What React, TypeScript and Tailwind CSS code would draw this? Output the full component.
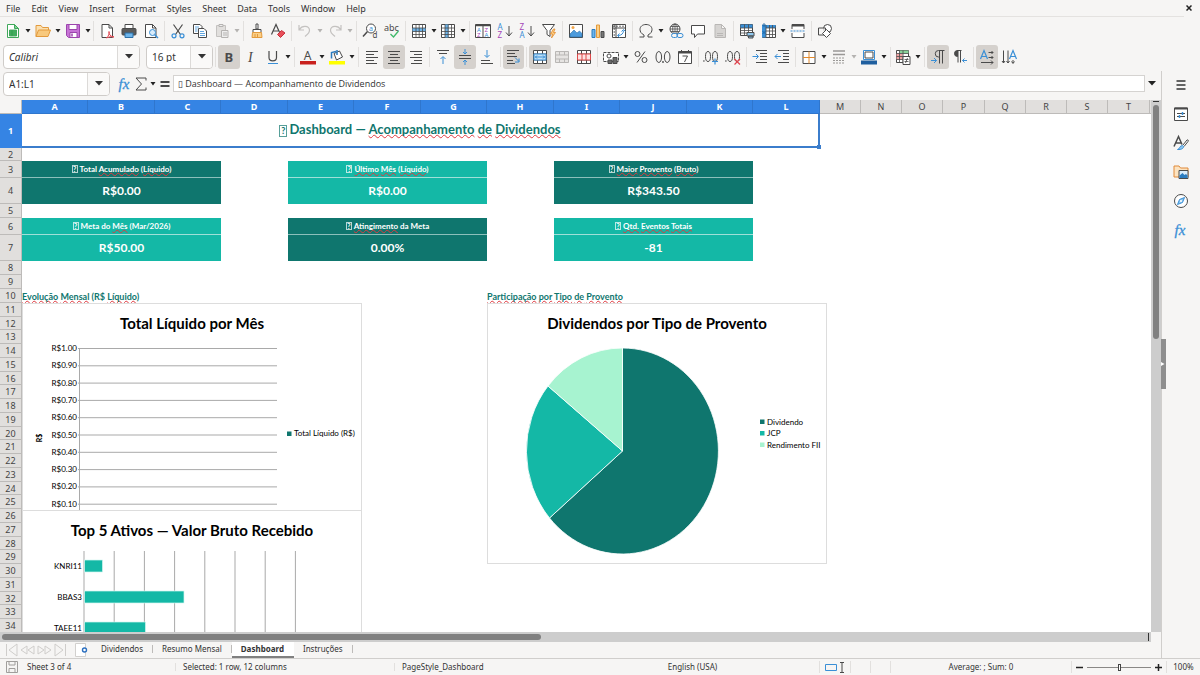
import { Fragment, ReactNode, useState } from 'react';

const INK = '#4a4a4a';
const BLUE = '#3a8fd6';
const DIM = '#c4c2c0';

// Icon drawings, all on a 16x16 grid
const icons: Record<string, ReactNode> = {
  new: (
    <>
      <path d="M2.5 1.5h7l4 4v9h-11z" fill="#fff" stroke="#3fa85a" />
      <path d="M9.5 1.5v4h4z" fill="#7ed394" stroke="#3fa85a" />
      <path d="M4.5 7h7v6h-7zM4.5 9h7M4.5 11h7M7 7v6" fill="#4fb96a" stroke="#2f9a4c" strokeWidth=".8" />
    </>
  ),
  open: (
    <>
      <path d="M1 13.5v-11h5l1.5 2h6v3" fill="#fbe0b0" stroke="#e39a3c" />
      <path d="M1 13.5l2.500-6.500h12l-2.500 6.500z" fill="#f8c97d" stroke="#e39a3c" />
    </>
  ),
  save: (
    <>
      <path d="M1.5 1.5h13v13h-11l-2-2z" fill="#c774d6" stroke="#9c45ad" />
      <path d="M4 1.5h8v5h-8zM5 9.5h7v5h-7z" fill="#fff" stroke="#9c45ad" />
      <path d="M7 10.5v3" stroke="#9c45ad" strokeWidth="1.5" />
    </>
  ),
  pdf: (
    <>
      <path d="M3 1.5h7l3.500 3.500v9.500H3z" fill="#fff" stroke={INK} />
      <path d="M10 1.5V5h3.500" stroke={INK} />
      <path d="M7.5 15c2-2 3-4 2.500-6.500-.3 3 1.500 5 5 5.500-3-.8-6 .2-7.500 1z" fill="#fff" stroke="#e0454f" />
    </>
  ),
  print: (
    <>
      <path d="M4 5V1.500h8V5" fill="#fff" stroke={INK} />
      <rect x="1" y="5.5" width="14" height="6.5" rx="1" fill="#5b5b5b" stroke={INK} />
      <path d="M4 10h8v4.500H4z" fill="#6db4ea" stroke="#2b6ea6" />
    </>
  ),
  preview: (
    <>
      <path d="M2.5 1.5h7l3.500 3.500v9.500H2.500z" fill="#fff" stroke={INK} />
      <path d="M9.5 1.5V5H13" stroke={INK} />
      <circle cx="9.5" cy="9.5" r="3" fill="#d9ecfb" stroke={BLUE} />
      <path d="M11.7 11.7L15 15" stroke={BLUE} strokeWidth="1.5" />
    </>
  ),
  cut: (
    <>
      <path d="M3.5 1.5l7 10M12.5 1.5l-7 10" stroke={INK} strokeWidth="1.2" />
      <circle cx="4" cy="12.8" r="2" stroke={BLUE} strokeWidth="1.2" />
      <circle cx="12" cy="12.8" r="2" stroke={BLUE} strokeWidth="1.2" />
    </>
  ),
  copy: (
    <>
      <path d="M1.5 1.5h6.500l2 2v7h-8.500z" fill="#fff" stroke={INK} />
      <path d="M6.5 5.5h5.500l2.500 2.500v6.500h-8z" fill="#fff" stroke={INK} />
      <path d="M3 4h4M3 6h2.500M3 8h2.500M8 8.500h4M8 10.500h5M8 12.500h5" stroke={BLUE} strokeWidth=".8" />
    </>
  ),
  paste: (
    <>
      <path d="M2.5 2.5h9v11h-9z" fill="#e1dfdd" stroke={DIM} />
      <path d="M5 1.5h4v2H5zM7.5 7.5h6.500v7H7.500zM9 10h4M9 12h4" fill="#eee" stroke="#b5b3b1" />
    </>
  ),
  clone: (
    <>
      <path d="M7 1h2v5H7zM4 6.500h8v3H4z" fill="#fff" stroke={INK} />
      <path d="M3.5 9.500h9l.5 5H3z" fill="#fbcf86" stroke="#e39a3c" />
      <path d="M6 11v3M8.500 11v3" stroke="#e39a3c" />
    </>
  ),
  clear: (
    <>
      <path d="M1.5 11.500L6 1.500l4.500 10M3.200 8h5" stroke={INK} strokeWidth="1.2" />
      <path d="M7.5 11.500l4-4 3.500 2.500-4.500 4.500z" fill="#e8505a" stroke="#c62f3b" />
    </>
  ),
  undo: <path d="M2 2v5h5M2.500 6.500C5 2 12 2.500 12.500 7c.2 3-2 4.500-4.500 6.500" stroke={DIM} strokeWidth="1.2" />,
  redo: <path d="M14 2v5H9M13.500 6.500C11 2 4 2.500 3.500 7c-.2 3 2 4.500 4.500 6.500" stroke={DIM} strokeWidth="1.2" />,
  find: (
    <>
      <circle cx="9" cy="5.5" r="4.500" fill="#fff" stroke={INK} />
      <path d="M5.5 8.500L1 13.500" stroke={INK} strokeWidth="1.5" />
      <text x="7" y="8" fontSize="7" fill={BLUE}>a</text>
      <text x="10.5" y="15" fontSize="8" fill={INK}>d</text>
    </>
  ),
  spell: (
    <>
      <text x="0" y="7.5" fontSize="9" fill={INK}>abc</text>
      <path d="M6.5 11l3 3 5-6" stroke="#3fb96a" strokeWidth="1.3" />
    </>
  ),
  row: (
    <>
      <path d="M1.5 1.5h13v13h-13z" fill="#fff" stroke={INK} />
      <path d="M1.5 5h13v3.500h-13z" fill="#6db4ea" />
      <path d="M1.5 5h13M1.5 8.500h13M1.5 11.500h13M5 1.500v13M8.200 1.500v13M11.500 1.500v13" stroke={INK} strokeWidth=".8" />
    </>
  ),
  column: (
    <>
      <path d="M1.5 1.5h13v13h-13z" fill="#fff" stroke={INK} />
      <path d="M5 1.500h3.500v13H5z" fill="#6db4ea" />
      <path d="M1.5 5h13M1.5 8.500h13M1.5 11.500h13M5 1.500v13M8.200 1.500v13M11.500 1.500v13" stroke={INK} strokeWidth=".8" />
    </>
  ),
  sort: (
    <>
      <path d="M.5 1.5h15v13H.5zM8 1.5v13" fill="#fff" stroke={INK} />
      <path d="M.5 2.5h15" stroke={INK} strokeWidth="1.5" />
      <text x="2" y="8.500" fontSize="6" fill={BLUE}>A</text>
      <text x="2" y="14" fontSize="6" fill="#a445b8">Z</text>
      <text x="9.5" y="8.500" fontSize="6" fill="#a445b8">Z</text>
      <text x="9.5" y="14" fontSize="6" fill={BLUE}>A</text>
    </>
  ),
  asc: (
    <>
      <text x=".5" y="6.800" fontSize="8" fill={BLUE}>A</text>
      <text x=".5" y="15" fontSize="8" fill="#a445b8">Z</text>
      <path d="M12 3v9.500M9 9.500l3 3.500 3-3.500" stroke={INK} />
    </>
  ),
  desc: (
    <>
      <text x=".5" y="6.800" fontSize="8" fill="#a445b8">Z</text>
      <text x=".5" y="15" fontSize="8" fill={BLUE}>A</text>
      <path d="M12 3v9.500M9 9.500l3 3.500 3-3.500" stroke={INK} />
    </>
  ),
  filter: (
    <>
      <path d="M1.5 1.5h12L9 7.500v6l-3-2v-4z" fill="#fff" stroke={INK} />
      <path d="M12.5 6l-3 5h2l-1 4 4-5.500h-2l1.500-3.500z" fill="#fbcf86" stroke="#e38a2c" strokeWidth=".8" />
    </>
  ),
  image: (
    <>
      <path d="M1.5 1.5h13v13h-13z" fill="#fff" stroke={INK} />
      <path d="M2 14v-3l4-4 3 3 2.500-2 2.500 2.500V14z" fill="#4c9bdc" stroke="#2b6ea6" strokeWidth=".6" />
      <circle cx="5" cy="4.5" r="1.5" fill="#f2a64a" />
    </>
  ),
  chart: (
    <>
      <path d="M2 6.500h3v8H2z" fill="#6db4ea" stroke="#2b7cc0" />
      <path d="M6.5 2h3v12.500h-3z" fill="#fbcf86" stroke="#e39a3c" />
      <path d="M11 8.500h3v6h-3z" fill="#777" stroke={INK} />
    </>
  ),
  pivot: (
    <>
      <path d="M1.5 1.5h13v13h-13zM1.5 5h13M5 1.500v13" fill="#fff" stroke={INK} />
      <path d="M7 12.500c3.500 0 5.500-2 5.500-5M10.500 8.500l2-2 2 2M8.500 10.500l-2 2 2 2" stroke={BLUE} />
      <path d="M2 3.200h12M3.200 2v12" stroke={INK} strokeWidth=".8" strokeDasharray="2 1" />
    </>
  ),
  omega: <path d="M1.5 14h4.500v-2C3 10.500 2 8.500 2 6.500 2 3.500 4.500 1.500 8 1.500s6 2 6 5c0 2-1 4-4 5.500v2h4.500" stroke={INK} />,
  link: (
    <>
      <circle cx="7" cy="6" r="5" fill="#fff" stroke={INK} />
      <path d="M2 6h10M7 1v10M3 3.500h8M3 8.500h8" stroke={INK} strokeWidth=".8" />
      <ellipse cx="7" cy="6" rx="2.3" ry="5" stroke={INK} strokeWidth=".8" />
      <rect x="3.5" y="10.5" width="6" height="4" rx="2" fill="#f6f5f4" stroke={BLUE} />
      <rect x="9" y="10.5" width="6" height="4" rx="2" stroke={BLUE} />
    </>
  ),
  comment: <path d="M1.5 2.5h13v8.500H7.500L4.500 14.500V11h-3z" fill="#fff" stroke={INK} />,
  page: <path d="M3 1.500h6.500l4 4v9H3zM9.500 1.500v4h4M5 10.500h6M5 12.500h6" fill="#d6d4d2" stroke="#b9b7b5" />,
  headers: (
    <>
      <path d="M1.5 1.5h12v11h-12z" fill="#fff" stroke={INK} />
      <path d="M1.5 1.5h12V5h-12z" fill={BLUE} />
      <path d="M1.5 5h12M1.5 7.500h12M1.5 10h12M5.500 1.500v11M9.500 1.500v11" stroke={INK} strokeWidth=".8" />
      <path d="M8 9.500h7v3.500H8zM9.500 13h4.500v2H9.500z" fill="#8fc7ee" stroke={INK} />
    </>
  ),
  freeze: (
    <>
      <path d="M1.5 2.5h13v12h-13z" fill="#fff" stroke={INK} />
      <path d="M1 2h13.500v3H5v9.500H1z" fill={BLUE} />
      <path d="M5 5h9.500M5 8h9.500M5 11.500h9.500M5 2v12.500M8.500 2v12.500M11.500 2v12.500" stroke={INK} strokeWidth=".8" />
      <path d="M3 0v4M1 2h4M1.500 8l3 3M4.500 8l-3 3" stroke="#1b5f9e" strokeWidth=".8" />
    </>
  ),
  split: (
    <>
      <path d="M2 6V1.500h12V6M2 10v4.500h12V10" fill="#fff" stroke={INK} />
      <path d="M2 2.500h12" stroke={INK} strokeWidth="2" />
      <path d="M.5 8h15" stroke={BLUE} strokeDasharray="2 1" />
    </>
  ),
  shapes: (
    <>
      <circle cx="10.5" cy="5.5" r="4" fill="#fff" stroke={INK} />
      <path d="M1.5 5h7v7h-7z" fill="#f6f5f4" fillOpacity=".7" stroke={INK} />
      <path d="M9.5 6.500l4 4-4 4-4-4z" fill="#fff" stroke={INK} />
    </>
  ),
  bold: <text x="3.5" y="12.8" fontSize="13" fontWeight="700" fill={INK}>B</text>,
  italic: <text x="5" y="12.8" fontSize="14" fontStyle="italic" fontFamily="Liberation Serif, serif" fill={INK}>I</text>,
  underline: (
    <>
      <path d="M4 2v6.500c0 4.500 7.500 4.500 7.500 0V2" stroke={INK} strokeWidth="1.2" />
      <path d="M3 14.500h10" stroke={BLUE} />
    </>
  ),
  fontColor: (
    <>
      <text x="3.8" y="10.5" fontSize="12" fill={INK}>A</text>
      <path d="M0 12h16v3.500H0z" fill="#c9211e" />
    </>
  ),
  highlight: (
    <>
      <path d="M5 4.500L10.500 2l3 6-6 3z" fill="#fff" stroke={INK} />
      <path d="M2.5 9.500V3.500L7 2.500M8 1v5" stroke="#2b7cc0" strokeWidth="1.5" />
      <path d="M0 12h16v3.500H0z" fill="#ffff00" />
    </>
  ),
  left: <path d="M2 2.500h12M2 5.500h8M2 8.500h12M2 11.500h8M2 14.500h11" stroke={INK} />,
  center: <path d="M2 2.500h12M4 5.500h8M2 8.500h12M4 11.500h8M2 14.500h12" stroke={INK} />,
  right: <path d="M2 2.500h12M6 5.500h8M2 8.500h12M6 11.500h8M3 14.500h11" stroke={INK} />,
  top: (
    <>
      <path d="M2 1.500h12M4 4.500h8" stroke={INK} />
      <path d="M8 15V8M5.500 10L8 7.500l2.500 2.500" stroke={BLUE} />
    </>
  ),
  middle: (
    <>
      <path d="M2 6.500h12M2 9.500h12" stroke={INK} />
      <path d="M8 0v4.500M6 3l2 2 2-2M8 16v-4.500M6 13l2-2 2 2" stroke={BLUE} />
    </>
  ),
  bottom: (
    <>
      <path d="M2 11.500h9M2 14.500h12" stroke={INK} />
      <path d="M8 1v7M5.500 6L8 8.500 10.500 6" stroke={BLUE} />
    </>
  ),
  wrap: (
    <>
      <path d="M2 1.500h12M2 4.500h8M2 7.500h10M2 11.500h6M2 14.500h8" stroke={INK} />
      <path d="M10 8.500l4 4M14 9.500v3.500h-4" stroke={BLUE} />
    </>
  ),
  merge: (
    <>
      <path d="M1.5 1.5h13v13h-13zM1.5 5h13M1.5 11h13M5.500 1.500V5M10.500 1.500V5M5.500 11v3.500M10.500 11v3.500" fill="#fff" stroke={INK} />
      <path d="M2 5h12v6H2z" fill="#bfe0f7" stroke={BLUE} />
      <path d="M3 8h10M5 6.500L3.500 8 5 9.500M11 6.500L12.500 8 11 9.500" stroke={BLUE} />
    </>
  ),
  mergeCells: <path d="M1.5 2.5h13v11h-13zM1.5 6h13M1.5 10h13M5.500 2.500V6M10.500 2.500V6M5.500 10v3.500M10.500 10v3.500" fill="#e6e4e2" stroke="#b9b7b5" />,
  splitCells: (
    <>
      <path d="M1.5 1.5h13v13h-13zM1.5 5h13M1.5 11h13M5.500 1.500V5M10.500 1.500V5M5.500 11v3.500M10.500 11v3.500" fill="#fff" stroke={INK} />
      <path d="M1.5 5h13v6h-13zM6 5v6M10 5v6" fill="#fde3e3" stroke="#dd4a4a" />
    </>
  ),
  currency: (
    <>
      <path d="M.5 3.500h15v9H.5z" fill="#fff" stroke={INK} strokeDasharray="3 1" />
      <circle cx="6" cy="7" r="2" stroke={INK} />
      <path d="M5 11h4v3.500H5zM10 8.500h4v6h-4z" fill="#6a6a6a" stroke={INK} />
    </>
  ),
  percent: (
    <>
      <circle cx="4.5" cy="5" r="2.5" stroke={INK} />
      <circle cx="11.5" cy="11" r="2.5" stroke={INK} />
      <path d="M12 2.500L4 13.500" stroke={INK} />
    </>
  ),
  number: (
    <>
      <ellipse cx="3.8" cy="8" rx="2.8" ry="5.5" stroke={INK} />
      <ellipse cx="12.2" cy="8" rx="2.8" ry="5.5" stroke={INK} />
      <circle cx="8" cy="13" r=".9" fill={INK} />
    </>
  ),
  date: (
    <>
      <path d="M1.5 2.500h13v12h-13z" fill="#fff" stroke={INK} />
      <path d="M1.5 3.500h13" stroke={INK} strokeWidth="2" />
      <path d="M4.5 1v3M11.500 1v3M5.500 7h5l-3 6" stroke={INK} />
    </>
  ),
  addDecimal: (
    <>
      <ellipse cx="5" cy="7.5" rx="2.5" ry="5" stroke={INK} />
      <ellipse cx="12" cy="7.5" rx="2.5" ry="5" stroke={INK} />
      <circle cx=".9" cy="12" r=".8" fill={INK} />
      <path d="M12 9.500v6M9 12.500h6" stroke={BLUE} strokeWidth="1.2" />
    </>
  ),
  removeDecimal: (
    <>
      <ellipse cx="5" cy="7.5" rx="2.5" ry="5" stroke={INK} />
      <ellipse cx="12" cy="7.5" rx="2.5" ry="5" stroke={INK} />
      <circle cx=".9" cy="12" r=".8" fill={INK} />
      <path d="M9.5 10l5.500 5.500M15 10l-5.500 5.500" stroke="#e0454f" strokeWidth="1.2" />
    </>
  ),
  indent: (
    <>
      <path d="M4 1.500h11M8 4.500h7M8 7.500h7M8 10.500h7M4 13.500h11" stroke={INK} />
      <path d="M.5 7.500h5.500M4 5l2.500 2.500L4 10" stroke={BLUE} />
    </>
  ),
  outdent: (
    <>
      <path d="M4 1.500h11M9 4.500h6M9 7.500h6M9 10.500h6M4 13.500h11" stroke={INK} />
      <path d="M1 7.500h6M3.500 5L1 7.500 3.500 10" stroke={BLUE} />
    </>
  ),
  borders: (
    <>
      <path d="M2 2.500h12v12H2z" fill="#fff" stroke={INK} />
      <path d="M8 2.500v12M2 8.500h12" stroke="#e38a2c" />
    </>
  ),
  borderStyle: (
    <>
      <path d="M2 2h12M2 5.500h12" stroke="#9a9896" strokeWidth="1.5" />
      <path d="M2 9h12M2 11.500h12M2 14h12" stroke="#9a9896" strokeDasharray="2 1" />
    </>
  ),
  borderColor: (
    <>
      <path d="M2.5 1.500h11v9h-11z" fill="#fff" stroke={BLUE} />
      <path d="M4 3h8v6H4z" stroke={INK} />
      <path d="M0 11.500h16v4H0z" fill="#1f5f9f" />
    </>
  ),
  conditional: (
    <>
      <path d="M1.5 1.500h12v12h-12z" fill="#fff" stroke={INK} />
      <path d="M4.5 1.500h9v3h-9z" fill="#8ad39b" />
      <path d="M1.5 4.500h6v6h-6z" fill="#f0a4a4" />
      <path d="M1.5 4.500h12M1.5 7.500h12M1.5 10.500h12M4.500 1.500v12M8 1.500v12" stroke={INK} strokeWidth=".8" />
      <path d="M8 7.500h7v8H8z" fill="#fff" stroke={INK} />
      <path d="M9.5 10.500h4M9.500 12.500h4M12.500 9l-2 5" stroke={INK} strokeWidth=".8" />
    </>
  ),
  ltr: (
    <>
      <path d="M14.5 1.500H8.500a3 3 0 0 0 0 6.500h1M9.500 1.500v13M12.500 1.500v13" stroke={INK} />
      <path d="M1 11.500h5.500M4 9l2.500 2.500L4 14" stroke={BLUE} />
    </>
  ),
  rtl: (
    <>
      <path d="M5.5 1.500a3 3 0 0 0 0 6z" fill={INK} stroke={INK} />
      <path d="M9.5 1.500H5M6 1.500v12M8.500 1.500v12" stroke={INK} />
      <path d="M10.5 11.500H15M12.500 9.500l-2 2 2 2" stroke={BLUE} />
    </>
  ),
  horizontalText: (
    <>
      <path d="M1.5 10L5 1.500 8.500 10M2.700 7.500h4.600" stroke={BLUE} strokeWidth="1.2" />
      <path d="M9.5 3.500H14M12.500 2L14 3.500 12.500 5M9.500 8.500H14M12.500 7L14 8.500 12.500 10M2 13.500h12M12 11.500l2 2-2 2" stroke={INK} />
    </>
  ),
  verticalText: (
    <>
      <path d="M8.5 10L12 1.500l3.500 8.500M9.700 7.500h4.600" stroke={BLUE} strokeWidth="1.2" />
      <path d="M2.5 1.500V14M1 12l1.500 2L4 12M7 1.500V14M5.500 12L7 14l1.500-2M12 11v3M10.500 12.500L12 14.500l1.500-2" stroke={INK} />
    </>
  ),
  fx: <text x="1.5" y="12.5" fontSize="15" fontStyle="italic" fontFamily="Liberation Serif, serif" fill={BLUE} stroke={BLUE} strokeWidth=".3">fx</text>,
  sum: <path d="M13 4.500V2H3l5.500 6L3 14h10v-2.500" stroke={INK} />,
  equals: <path d="M3.5 6h9M3.500 10h9" stroke={INK} strokeWidth="1.8" />,
  menu: <path d="M3.5 4h9M3.500 8h9M3.500 12h9" stroke="#333" strokeWidth="1.5" />,
  properties: (
    <>
      <path d="M1.5 2h13v12.500h-13z" fill="#fff" stroke={INK} />
      <path d="M1.5 2.500h13" stroke={INK} strokeWidth="2" />
      <path d="M4 7.500h8M4 10.500h8" stroke={INK} />
      <path d="M9.5 6v3M6.500 9v3" stroke={BLUE} strokeWidth="1.5" />
    </>
  ),
  styles: (
    <>
      <path d="M1 11.500L5.500 1.500l3.500 8M2.500 8h5.500" stroke={INK} strokeWidth="1.5" />
      <path d="M10 10l4-5c1.500-.5 1.500.5 1 1.500l-4 5" fill="#fff" stroke={INK} />
      <path d="M4.5 14.500c2 0 2-4 5-4 2.500 1 .5 4.500-5 4z" fill="#8fc7ee" stroke={BLUE} />
    </>
  ),
  gallery: (
    <>
      <path d="M1 13V2h5l1.500 2H15v9z" fill="#fce3c0" stroke="#e08a3a" />
      <path d="M6 6.500h9v8H6z" fill="#d9ecfb" stroke={INK} />
      <path d="M6.5 14v-2.500l3-2.500 2 2 1.500-1 1.500 1.500V14z" fill="#2b7cc0" />
    </>
  ),
  navigator: (
    <>
      <circle cx="8" cy="8" r="6.500" fill="#fff" stroke={INK} />
      <path d="M11.5 4.500L9.500 9.500l-5 2 2-5z" fill="#8fc7ee" stroke={BLUE} />
      <circle cx="8" cy="8" r="1" fill="#fff" />
    </>
  ),
  addSheet: (
    <>
      <path d="M1.5 1.500h10v13h-10z" fill="#fff" stroke="#d2d0ce" />
      <circle cx="10.5" cy="8" r="2" fill="#fff" stroke="#2b6fc0" strokeWidth="1.4" />
    </>
  ),
  document: <path d="M2.5 2.500h11v11h-11zM5 2.500V6h6V2.500M5 13.500v-4h6v4" stroke="#a09e9c" />,
};

function Icon({ name }: { name: string }) {
  return (
    <svg viewBox="0 0 16 16" className="size-4 shrink-0 overflow-visible font-[Noto_Sans,sans-serif]" fill="none" aria-hidden="true">
      {icons[name]}
    </svg>
  );
}

function Caret({ dim = false }: { dim?: boolean }) {
  return (
    <svg viewBox="0 0 6 4" className="h-[4px] w-[6px]" aria-hidden="true">
      <path d="M0.5 0h5L3 3.500z" fill={dim ? '#b5b3b1' : '#222'} />
    </svg>
  );
}

// [icon, label, flags]: v = drop-down arrow, d = disabled, on = pressed
type Tool = [string, string, string?];

const standardTools: Tool[][] = [
  [['new', 'New', 'v'], ['open', 'Open', 'v'], ['save', 'Save', 'v']],
  [['pdf', 'Export as PDF'], ['print', 'Print'], ['preview', 'Print Preview']],
  [['cut', 'Cut'], ['copy', 'Copy'], ['paste', 'Paste', 'vd']],
  [['clone', 'Clone Formatting'], ['clear', 'Clear Formatting']],
  [['undo', 'Undo', 'vd'], ['redo', 'Redo', 'vd']],
  [['find', 'Find and Replace'], ['spell', 'Spelling']],
  [['row', 'Row', 'v'], ['column', 'Column', 'v']],
  [['sort', 'Sort'], ['asc', 'Sort Ascending'], ['desc', 'Sort Descending'], ['filter', 'AutoFilter']],
  [['image', 'Insert Image'], ['chart', 'Insert Chart'], ['pivot', 'Pivot Table']],
  [['omega', 'Special Character', 'v'], ['link', 'Hyperlink'], ['comment', 'Comment'], ['page', 'Headers and Footers']],
  [['headers', 'Print Area'], ['freeze', 'Freeze Rows and Columns', 'v'], ['split', 'Split Window']],
  [['shapes', 'Show Draw Functions']],
];

const formatTools: Tool[][] = [
  [['bold', 'Bold', 'on'], ['italic', 'Italic'], ['underline', 'Underline', 'v']],
  [['fontColor', 'Font Color', 'v'], ['highlight', 'Background Color', 'v']],
  [['left', 'Align Left'], ['center', 'Center', 'on'], ['right', 'Align Right']],
  [['top', 'Align Top'], ['middle', 'Center Vertically', 'on'], ['bottom', 'Align Bottom']],
  [['wrap', 'Wrap Text', 'on']],
  [['merge', 'Merge and Center', 'on'], ['mergeCells', 'Merge Cells'], ['splitCells', 'Unmerge Cells']],
  [['currency', 'Currency', 'v'], ['percent', 'Percent'], ['number', 'Number'], ['date', 'Date']],
  [['addDecimal', 'Add Decimal Place'], ['removeDecimal', 'Delete Decimal Place']],
  [['indent', 'Increase Indent'], ['outdent', 'Decrease Indent']],
  [['borders', 'Borders', 'v'], ['borderStyle', 'Border Style', 'vd'], ['borderColor', 'Border Color', 'v']],
  [['conditional', 'Conditional Formatting', 'v']],
  [['ltr', 'Left-To-Right', 'on'], ['rtl', 'Right-To-Left']],
  [['horizontalText', 'Text Direction Horizontal', 'on'], ['verticalText', 'Text Direction Vertical']],
];

function Tools({ groups }: { groups: Tool[][] }) {
  return (
    <>
      {groups.map((group, i) => (
        <Fragment key={i}>
          {i > 0 && (
            <div className="flex h-5 w-[5px] justify-center">
              <div className="w-px bg-[#e2e0de]" />
            </div>
          )}
          {group.map(([icon, label, flags = '']) => (
            <Fragment key={icon}>
              <button
                aria-label={label}
                className={`flex h-6 w-[22px] items-center justify-center rounded-[3px] ${
                  flags === 'on' ? 'bg-[#d5d1cd]' : 'hover:bg-[#e6e4e2]'
                }`}
              >
                <Icon name={icon} />
              </button>
              {flags.includes('v') && (
                <button aria-label={`${label} options`} className="flex h-6 w-2 items-center justify-center">
                  <Caret dim={flags.includes('d')} />
                </button>
              )}
            </Fragment>
          ))}
        </Fragment>
      ))}
    </>
  );
}

function Combo({ label, options, className }: { label: string; options: string[]; className: string }) {
  return (
    <div className={`relative h-6 shrink-0 rounded-[4px] border border-[#cfccc9] bg-white ${className}`}>
      <select aria-label={label} className="size-full appearance-none bg-transparent pl-[5px] text-[10px] outline-none">
        {options.map((option) => (
          <option key={option}>{option}</option>
        ))}
      </select>
      <span className="pointer-events-none absolute inset-y-0 right-0 flex w-[22px] items-center justify-center rounded-r-[3px] border-l border-[#dcdad8] bg-[#faf9f8]">
        <svg viewBox="0 0 8 5" className="h-[5px] w-2" aria-hidden="true">
          <path d="M0 0h8L4 4.500z" fill="#333" />
        </svg>
      </span>
    </div>
  );
}

// Word flagged by the spell checker
function Sp({ children }: { children: ReactNode }) {
  return (
    <span className="underline decoration-[#e0383e] decoration-wavy decoration-1 underline-offset-0 [text-decoration-skip-ink:none]">
      {children}
    </span>
  );
}

function MissingGlyph({ large = false }: { large?: boolean }) {
  return (
    <span
      className={`mr-[2px] inline-flex items-center justify-center border border-current/70 align-middle font-bold ${
        large ? 'h-[12px] w-2 text-[9px]' : 'h-2 w-[6px] text-[7px]'
      }`}
    >
      ?
    </span>
  );
}

interface Cell {
  col: number;
  span: number;
  content: ReactNode;
  className: string;
}

const LABEL = 'border-b text-center text-[8px] font-bold text-white';
const VALUE = 'text-center text-[12px] font-bold text-white';
const DARK = 'bg-[#0f766e] border-[#8cc0bb]';
const LIGHT = 'bg-[#14b8a6] border-[#9fe0d8]';
const SECTION = 'text-left text-[9px] font-bold text-[#0f766e]';

const cells: Record<number, Cell[]> = {
  1: [
    {
      col: 0,
      span: 12,
      className: 'relative border-r-2 border-b-2 border-[#3b7dcc] text-center text-[13px] font-bold text-[#0f766e]',
      content: (
        <>
          <MissingGlyph large />
          Dashboard — <Sp>Acompanhamento</Sp> <Sp>de</Sp> <Sp>Dividendos</Sp>
          <span className="absolute -right-[3px] -bottom-[3px] size-1 bg-[#3b7dcc]" />
        </>
      ),
    },
  ],
  3: [
    { col: 0, span: 3, className: `${LABEL} ${DARK}`, content: <><MissingGlyph />Total <Sp>Acumulado</Sp> (<Sp>Líquido</Sp>)</> },
    { col: 4, span: 3, className: `${LABEL} ${LIGHT}`, content: <><MissingGlyph /><Sp>Último</Sp> <Sp>Mês</Sp> (<Sp>Líquido</Sp>)</> },
    { col: 8, span: 3, className: `${LABEL} ${DARK}`, content: <><MissingGlyph /><Sp>Maior</Sp> <Sp>Provento</Sp> (<Sp>Bruto</Sp>)</> },
  ],
  4: [
    { col: 0, span: 3, className: `${VALUE} ${DARK}`, content: 'R$0.00' },
    { col: 4, span: 3, className: `${VALUE} ${LIGHT}`, content: 'R$0.00' },
    { col: 8, span: 3, className: `${VALUE} ${DARK}`, content: 'R$343.50' },
  ],
  6: [
    { col: 0, span: 3, className: `${LABEL} ${LIGHT}`, content: <><MissingGlyph />Meta do <Sp>Mês</Sp> (Mar/2026)</> },
    { col: 4, span: 3, className: `${LABEL} ${DARK}`, content: <><MissingGlyph /><Sp>Atingimento</Sp> da Meta</> },
    { col: 8, span: 3, className: `${LABEL} ${LIGHT}`, content: <><MissingGlyph /><Sp>Qtd.</Sp> <Sp>Eventos</Sp> <Sp>Totais</Sp></> },
  ],
  7: [
    { col: 0, span: 3, className: `${VALUE} ${LIGHT}`, content: 'R$50.00' },
    { col: 4, span: 3, className: `${VALUE} ${DARK}`, content: '0.00%' },
    { col: 8, span: 3, className: `${VALUE} ${LIGHT}`, content: '-81' },
  ],
  10: [
    { col: 0, span: 3, className: SECTION, content: <><Sp>Evolução</Sp> <Sp>Mensal</Sp> (R$ <Sp>Líquido</Sp>)</> },
    { col: 7, span: 3, className: SECTION, content: <><Sp>Participação</Sp> <Sp>por</Sp> <Sp>Tipo</Sp> <Sp>de</Sp> <Sp>Provento</Sp></> },
  ],
};

const columns = 'ABCDEFGHIJKLMNOPQRST'.split('');
const rowNumbers = Array.from({ length: 34 }, (_, i) => i + 1);

function colWidth(i: number) {
  if (i < 12) return i % 2 ? 'w-[67px]' : 'w-[66px]';
  return i % 4 === 3 ? 'w-[42px]' : 'w-[41px]';
}

function rowHeight(row: number) {
  if (row === 1) return 'h-[34px]';
  if (row === 2) return 'h-[13px]';
  if (row === 3 || row === 6) return 'h-[17px]';
  if (row === 4 || row === 7) return 'h-[26px]';
  return row > 8 && row % 4 === 0 ? 'h-[13px]' : 'h-[14px]';
}

function rowCells(row: number) {
  const out: ReactNode[] = [];
  let col = 0;
  while (col < columns.length) {
    const cell = cells[row]?.find((c) => c.col === col);
    out.push(
      <td key={col} colSpan={cell?.span} className={`p-0 whitespace-nowrap ${cell?.className ?? ''}`}>
        {cell?.content}
      </td>
    );
    col += cell?.span ?? 1;
  }
  return out;
}

function SheetTable() {
  return (
    <table className="w-[1151px] table-fixed border-separate border-spacing-0 font-[Lato,sans-serif] leading-none">
      <thead className="font-[Noto_Sans,sans-serif] text-[9px]">
        <tr className="h-[14px]">
          <th className="w-[22px] border-r border-b border-[#bdbbb9] bg-[#f6f5f4] p-0" aria-label="Select all" />
          {columns.map((name, i) => (
            <th
              key={name}
              scope="col"
              className={`border-r border-b p-0 ${colWidth(i)} ${
                i < 12 ? 'border-[#2f76cd] bg-[#3584e4] text-white' : 'border-[#bdbbb9] bg-[#e1dfdd] font-normal text-[#444]'
              }`}
            >
              {name}
            </th>
          ))}
          <th className="border-b border-[#bdbbb9] bg-[#e1dfdd] p-0" />
        </tr>
      </thead>
      <tbody>
        {rowNumbers.map((row) => (
          <tr key={row} className={rowHeight(row)}>
            <th
              scope="row"
              className={`border-r border-b p-0 font-[Noto_Sans,sans-serif] text-[9px] ${
                row === 1 ? 'border-[#3584e4] bg-[#3584e4] text-white' : 'border-[#bdbbb9] bg-[#e1dfdd] font-normal text-[#444]'
              }`}
            >
              {row}
            </th>
            {rowCells(row)}
            <td className="p-0" />
          </tr>
        ))}
      </tbody>
    </table>
  );
}

const axis = ['1.00', '0.90', '0.80', '0.70', '0.60', '0.50', '0.40', '0.30', '0.20', '0.10'];

function MonthlyChart() {
  return (
    <svg viewBox="1 1 338 206" className="block h-[208px] w-[340px] border border-[#dddddd] bg-white font-[Lato,sans-serif]" role="img" aria-label="Total Líquido por Mês">
      <text x="170" y="26" fontSize="15" fontWeight="700" textAnchor="middle">Total Líquido por Mês</text>
      {axis.map((value, i) => (
        <g key={value}>
          <path d={`M56 ${45.5 + i * 17.3}H255`} stroke="#a9a9a9" />
          <text x="55" y={48 + i * 17.3} fontSize="8" textAnchor="end">R${value}</text>
        </g>
      ))}
      <path d="M57.5 45v163" stroke="#a9a9a9" />
      <text x="0" y="0" fontSize="7" fontWeight="700" textAnchor="middle" transform="translate(20 135) rotate(-90)">R$</text>
      <rect x="265" y="128.500" width="4.500" height="4.500" fill="#0f766e" />
      <text x="272" y="133" fontSize="8">Total Líquido (R$)</text>
    </svg>
  );
}

const assets = [
  { name: 'KNRI11', width: 18 },
  { name: 'BBAS3', width: 99.5 },
  { name: 'TAEE11', width: 61 },
];

function AssetsChart() {
  return (
    <svg viewBox="1 1 338 206" className="-mt-px block h-[208px] w-[340px] border border-[#dddddd] bg-white font-[Lato,sans-serif]" role="img" aria-label="Top 5 Ativos — Valor Bruto Recebido">
      <text x="170" y="26" fontSize="15" fontWeight="700" textAnchor="middle">Top 5 Ativos — Valor Bruto Recebido</text>
      {[0, 1, 2, 3, 4, 5, 6, 7].map((i) => (
        <path key={i} d={`M${62 + i * 30.2} 41V208`} stroke="#a9a9a9" />
      ))}
      {assets.map((asset, i) => (
        <g key={asset.name}>
          <rect x="62.5" y={50 + i * 31} width={asset.width} height="12" fill="#14b8a6" stroke="#d5f5f0" strokeWidth=".7" />
          <text x="60" y={58.5 + i * 31} fontSize="8" textAnchor="end">{asset.name}</text>
        </g>
      ))}
    </svg>
  );
}

const legend = [
  { name: 'Dividendo', color: '#0f766e' },
  { name: 'JCP', color: '#14b8a6' },
  { name: 'Rendimento FII', color: '#a7f3d0' },
];

function TypeChart() {
  return (
    <svg viewBox="1 1 338 259" className="block h-[261px] w-[340px] border border-[#dddddd] bg-white font-[Lato,sans-serif]" role="img" aria-label="Dividendos por Tipo de Provento">
      <text x="170" y="26" fontSize="15" fontWeight="700" textAnchor="middle">Dividendos por Tipo de Provento</text>
      <g stroke="#fff" strokeWidth=".8">
        <path d="M135.5 148V45A96 103 0 1 1 62.500 215z" fill="#0f766e" />
        <path d="M135.5 148L62.500 215A96 103 0 0 1 61 83z" fill="#14b8a6" />
        <path d="M135.5 148L61 83A96 103 0 0 1 135.500 45z" fill="#a7f3d0" />
      </g>
      {legend.map((item, i) => (
        <g key={item.name}>
          <rect x="273" y={116.5 + i * 11.5} width="4.500" height="4.500" fill={item.color} />
          <text x="280" y={121.5 + i * 11.5} fontSize="8">{item.name}</text>
        </g>
      ))}
    </svg>
  );
}

const menus = ['File', 'Edit', 'View', 'Insert', 'Format', 'Styles', 'Sheet', 'Data', 'Tools', 'Window', 'Help'];
const sheets = ['Dividendos', 'Resumo Mensal', 'Dashboard', 'Instruções'];
const decks: [string, string][] = [
  ['menu', 'Sidebar Settings'],
  ['properties', 'Properties'],
  ['styles', 'Styles'],
  ['gallery', 'Gallery'],
  ['navigator', 'Navigator'],
  ['fx', 'Functions'],
];

export default function App() {
  const [activeSheet, setActiveSheet] = useState('Dashboard');
  const [zoom, setZoom] = useState(100);

  return (
    <div className="flex h-screen flex-col overflow-hidden bg-[#f6f5f4] font-[Noto_Sans,sans-serif] text-[9px] leading-none text-[#333]">
      {/* Menu bar */}
      <nav className="mr-4 flex h-[17px] shrink-0 items-center border-b border-[#e4e2e0] pl-[6px]">
        <div className="flex gap-[11px]">
          {menus.map((menu) => (
            <button key={menu}>{menu}</button>
          ))}
        </div>
        <button aria-label="Close document" className="-mr-2 ml-auto">
          <svg viewBox="0 0 6 6" className="size-[6px]" aria-hidden="true">
            <path d="M.5.5l5 5M5.5.5l-5 5" stroke="#222" strokeWidth="1.5" />
          </svg>
        </button>
      </nav>

      {/* Standard toolbar */}
      <div className="flex h-[27px] w-full max-w-[836px] shrink-0 items-center pl-[2px]">
        <Tools groups={standardTools} />
      </div>

      {/* Formatting toolbar */}
      <div className="flex h-[27px] w-full max-w-[1020px] shrink-0 items-center pb-[2px] pl-[3px]">
        <Combo label="Font Name" options={['Calibri', 'Carlito', 'Liberation Sans']} className="mr-[6px] w-[137px] italic" />
        <Combo label="Font Size" options={['16 pt', '11 pt', '12 pt']} className="mr-[2px] w-[67px]" />
        <div className="mr-[2px] h-5 w-px shrink-0 bg-[#e2e0de]" />
        <Tools groups={formatTools} />
      </div>

      <div className="flex min-h-0 flex-1">
        <main className="flex min-w-0 flex-1 flex-col">
          {/* Formula bar */}
          <div className="flex h-[29px] shrink-0 items-center pr-[5px] pb-[4px] pl-[3px]">
            <Combo label="Name Box" options={['A1:L1']} className="mr-[7px] w-[107px]" />
            <button aria-label="Function Wizard"><Icon name="fx" /></button>
            <button aria-label="Select Function" className="flex items-center gap-px">
              <Icon name="sum" />
              <Caret />
            </button>
            <button aria-label="Formula" className="ml-px"><Icon name="equals" /></button>
            <input
              aria-label="Formula input"
              defaultValue="▯ Dashboard — Acompanhamento de Dividendos"
              className="h-[17px] min-w-0 flex-1 border border-[#d5d3d1] bg-white pl-1 font-[Open_Sans,Noto_Sans,sans-serif] text-[9px] outline-none"
            />
            <button aria-label="Expand Formula Bar" className="ml-[3px]">
              <svg viewBox="0 0 8 5" className="h-[5px] w-2" aria-hidden="true">
                <path d="M0 0h8L4 4.500z" fill="#222" />
              </svg>
            </button>
          </div>

          <div className="flex min-h-0 flex-1">
            <div className="flex min-w-0 flex-1 flex-col">
              {/* Sheet */}
              <div className="relative min-h-0 flex-1 overflow-hidden bg-white text-black">
                <SheetTable />
                <div className="absolute top-[203px] left-[22px]">
                  <MonthlyChart />
                  <AssetsChart />
                </div>
                <div className="absolute top-[203px] left-[487px]">
                  <TypeChart />
                </div>
              </div>
              <div className="flex h-[10px] shrink-0 items-center justify-between bg-[#cdcdcd] px-[2px]">
                <div className="h-[6px] w-[47%] rounded-full bg-[#808080]" />
                <div className="h-2 w-px bg-[#333]" />
              </div>
            </div>
            <div className="mb-[10px] flex w-[10px] shrink-0 flex-col items-center bg-[#cdcdcd] pt-px">
              <div className="mb-[3px] h-px w-[6px] bg-[#333]" />
              <div className="h-[44%] w-[6px] rounded-full bg-[#808080]" />
            </div>
          </div>

          {/* Sheet tabs */}
          <div className="flex h-4 shrink-0 items-stretch pl-[5px] text-[8px]">
            <svg viewBox="0 0 62 14" className="mt-px h-[14px] w-[62px]" fill="none" stroke="#cfcdcb" aria-hidden="true">
              <path d="M1.5 1v12M12 1L4 7l8 6zM22 3l-6 4 6 4zM29 3l-6 4 6 4zM33 3l6 4-6 4zM40 3l6 4-6 4zM50 1l8 6-8 6zM60.5 1v12" />
            </svg>
            <button aria-label="Add Sheet" className="ml-[7px]"><Icon name="addSheet" /></button>
            <div role="tablist" className="ml-[2px] flex">
              {sheets.map((sheet) => (
                <button
                  key={sheet}
                  role="tab"
                  aria-selected={sheet === activeSheet}
                  onClick={() => setActiveSheet(sheet)}
                  className={`flex items-center border-b-2 ${
                    sheet === activeSheet ? 'border-[#808080] bg-white font-bold' : 'border-transparent'
                  }`}
                >
                  <span className="px-[9px]">{sheet}</span>
                  <span className={`h-2 w-px ${sheet === activeSheet ? '' : 'bg-[#bdbbb9]'}`} />
                </button>
              ))}
            </div>
          </div>
        </main>

        {/* Sidebar */}
        <aside className="relative flex w-[39px] shrink-0 flex-col items-center gap-[13px] border-l border-[#d0cecc] pt-[6px]">
          {decks.map(([icon, label]) => (
            <button key={icon} aria-label={label}><Icon name={icon} /></button>
          ))}
          <button aria-label="Hide sidebar" className="absolute top-[268px] -left-px flex h-[50px] w-[5px] items-center bg-[#8e8e8e]">
            <svg viewBox="0 0 4 6" className="h-[6px] w-[4px]" aria-hidden="true">
              <path d="M0 1l3.500 2L0 5z" fill="#fff" />
            </svg>
          </button>
        </aside>
      </div>

      {/* Status bar */}
      <footer className="flex h-[17px] shrink-0 items-center border-t border-[#d0cecc] pl-1 text-[8px]">
        <Icon name="document" />
        <span className="w-[155px] pl-[7px]">Sheet 3 of 4</span>
        <span className="w-[219px] border-l border-[#e2e0de] pl-[7px]">Selected: 1 row, 12 columns</span>
        <span className="w-[172px] border-l border-[#e2e0de] pl-[7px]">PageStyle_Dashboard</span>
        <span className="flex-1 text-center">English (USA)</span>
        <span className="flex h-3 w-8 items-center justify-center border-x border-[#e2e0de]">
          <svg viewBox="0 0 20 12" className="h-3 w-5" fill="none" aria-hidden="true">
            <path d="M.5 3.500h11v6H.5z" stroke={BLUE} />
            <path d="M15 1.500h4M17 1.500v10M15 11.500h4" stroke={INK} />
          </svg>
        </span>
        <span className="h-3 w-5 border-r border-[#e2e0de]" />
        <span className="h-3 w-5 border-r border-[#e2e0de]" />
        <span className="w-[180px] text-center">Average: ; Sum: 0</span>
        <div className="flex h-3 items-center border-x border-[#e2e0de] px-1">
          <button aria-label="Zoom Out" onClick={() => setZoom(zoom - 10)}>
            <svg viewBox="0 0 7 7" className="size-[7px]" aria-hidden="true"><path d="M0 3.500h7" stroke="#222" strokeWidth="1.5" /></svg>
          </button>
          <input
            type="range"
            aria-label="Zoom"
            min={0}
            max={200}
            value={zoom}
            onChange={(e) => setZoom(Number(e.target.value))}
            className="mx-1 h-px w-16 appearance-none bg-[#8a8886] [&::-webkit-slider-thumb]:h-[7px] [&::-webkit-slider-thumb]:w-[3px] [&::-webkit-slider-thumb]:appearance-none [&::-webkit-slider-thumb]:border [&::-webkit-slider-thumb]:border-[#444] [&::-webkit-slider-thumb]:bg-white"
          />
          <button aria-label="Zoom In" onClick={() => setZoom(zoom + 10)}>
            <svg viewBox="0 0 7 7" className="size-[7px]" aria-hidden="true"><path d="M0 3.500h7M3.500 0v7" stroke="#222" strokeWidth="1.5" /></svg>
          </button>
        </div>
        <span className="w-[33px] text-center">{zoom}%</span>
      </footer>
    </div>
  );
}
